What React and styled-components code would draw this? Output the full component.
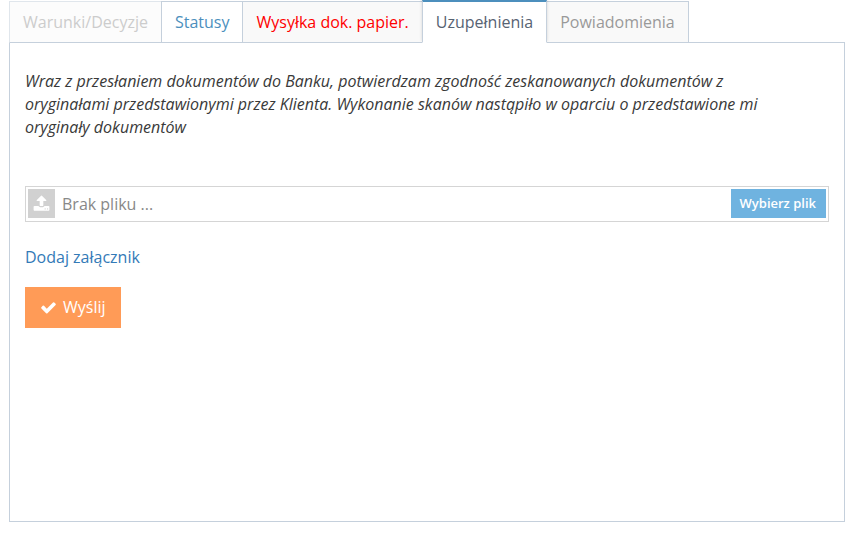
import React, { useRef, useState } from "react";
import styled, { createGlobalStyle } from "styled-components";

const GlobalStyle = createGlobalStyle`
  *, *::before, *::after {
    box-sizing: border-box;
  }
  body {
    margin: 0;
    background: #fff;
    color: #393939;
    font-family: "Open Sans", "Liberation Sans", sans-serif;
    font-size: 16px;
    line-height: 23px;
  }
  button, input {
    font: inherit;
  }
`;

const Page = styled.main`
  display: flex;
  flex-direction: column;
  min-height: 100vh;
  padding: 0 12px 12px 9px;
`;

const TabList = styled.div`
  display: flex;
  align-items: flex-end;
  position: relative;
  z-index: 1;
  margin-bottom: -1px;
`;

const Tab = styled.button`
  height: 42px;
  margin: 0 -1px 0 0;
  padding: 0 13px;
  border: 1px solid #c5d0dc;
  background: ${({ $background }) => $background || "#f9f9f9"};
  color: ${({ $color }) => $color || "#999"};
  white-space: nowrap;
  cursor: pointer;

  &:disabled {
    border-color: #e0e6ec #c5d0dc #c5d0dc #e0e6ec;
    background: #fcfcfc;
    color: #ccc;
    cursor: default;
  }

  &[aria-selected="true"] {
    position: relative;
    height: 43px;
    border-top: 2px solid #4c8fbd;
    border-bottom-color: transparent;
    background: #fff;
    color: #576373;
    box-shadow: 0 -2px 3px 0 rgba(0, 0, 0, 0.15);
    clip-path: inset(0 -3px 0 -3px);
  }
`;

const Panel = styled.section`
  flex: 1;
  padding: 27px 15px 16px;
  border: 1px solid #c5d0dc;
`;

const Statement = styled.p`
  margin: 0 0 47px;
  padding-right: 32px;
  font-style: italic;
`;

const FileField = styled.div`
  display: flex;
  align-items: stretch;
  height: 36px;
  padding: 2px;
  border: 1px solid #d5d5d5;
  background: #fff;
`;

const FileIcon = styled.span`
  display: flex;
  align-items: center;
  justify-content: center;
  width: 27px;
  margin-bottom: 1px;
  background: #d1d1d1;
  color: #fff;
`;

const FileName = styled.label`
  flex: 1;
  align-self: center;
  padding-left: 7px;
  overflow: hidden;
  color: #888;
  text-overflow: ellipsis;
  white-space: nowrap;
`;

const BrowseButton = styled.button`
  margin-bottom: 1px;
  padding: 0 10px 0 9px;
  border: 0;
  background: #6fb3e0;
  color: #fff;
  font-size: 13px;
  font-weight: 600;
  cursor: pointer;
`;

const AddLink = styled.a`
  display: table;
  margin: 24px 0 18px;
  color: #337ab7;
  text-decoration: none;
`;

const SubmitButton = styled.button`
  display: flex;
  align-items: center;
  gap: 6px;
  height: 41px;
  padding: 0 15px;
  border: 0;
  background: #ff9b57;
  color: #fff;
  cursor: pointer;
`;

const tabs = [
  { id: "decisions", label: "Warunki/Decyzje", disabled: true },
  { id: "statuses", label: "Statusy", color: "#4c8fbd", background: "#fff" },
  { id: "paper", label: "Wysyłka dok. papier.", color: "#f00" },
  { id: "supplements", label: "Uzupełnienia" },
  { id: "notifications", label: "Powiadomienia" }
];

const UploadIcon = () => (
  <svg width="17" height="17" viewBox="0 0 1792 1792" fill="currentColor" aria-hidden="true">
    <path d="M1344 1472q0-26-19-45t-45-19-45 19-19 45 19 45 45 19 45-19 19-45zm256 0q0-26-19-45t-45-19-45 19-19 45 19 45 45 19 45-19 19-45zm128-224v320q0 40-28 68t-68 28h-1472q-40 0-68-28t-28-68v-320q0-40 28-68t68-28h427q21 56 70.5 92t110.5 36h256q61 0 110.5-36t70.5-92h427q40 0 68 28t28 68zm-325-648q-17 40-59 40h-256v448q0 26-19 45t-45 19h-256q-26 0-45-19t-19-45v-448h-256q-42 0-59-40-17-39 14-69l448-448q18-19 45-19t45 19l448 448q31 30 14 69z" />
  </svg>
);

const CheckIcon = () => (
  <svg width="17" height="17" viewBox="0 0 1792 1792" fill="currentColor" aria-hidden="true">
    <path d="M1671 566q0 40-28 68l-724 724-136 136q-28 28-68 28t-68-28l-136-136-362-362q-28-28-28-68t28-68l136-136q28-28 68-28t68 28l294 295 656-657q28-28 68-28t68 28l136 136q28 28 28 68z" />
  </svg>
);

function FilePicker() {
  const inputRef = useRef(null);
  const [fileName, setFileName] = useState("");

  const handleChange = event => {
    const file = event.target.files[0];
    setFileName(file ? file.name : "");
  };

  return (
    <FileField>
      <FileIcon>
        <UploadIcon />
      </FileIcon>
      <FileName htmlFor="attachment">{fileName || "Brak pliku ..."}</FileName>
      <input id="attachment" ref={inputRef} type="file" hidden onChange={handleChange} />
      <BrowseButton type="button" onClick={() => inputRef.current.click()}>
        Wybierz plik
      </BrowseButton>
    </FileField>
  );
}

export default function App() {
  const [active, setActive] = useState("supplements");

  return (
    <>
      <GlobalStyle />
      <Page>
        <TabList role="tablist">
          {tabs.map(tab => (
            <Tab
              key={tab.id}
              id={`tab-${tab.id}`}
              type="button"
              role="tab"
              aria-selected={tab.id === active}
              aria-controls="panel"
              disabled={tab.disabled}
              $color={tab.color}
              $background={tab.background}
              onClick={() => setActive(tab.id)}
            >
              {tab.label}
            </Tab>
          ))}
        </TabList>
        <Panel id="panel" role="tabpanel" aria-labelledby={`tab-${active}`}>
          {active === "supplements" && (
            <form onSubmit={event => event.preventDefault()}>
              <Statement>
                Wraz z przesłaniem dokumentów do Banku, potwierdzam zgodność
                zeskanowanych dokumentów z oryginałami przedstawionymi przez
                Klienta. Wykonanie skanów nastąpiło w oparciu o przedstawione mi
                oryginały dokumentów
              </Statement>
              <FilePicker />
              <AddLink href="#attachment">Dodaj załącznik</AddLink>
              <SubmitButton type="submit">
                <CheckIcon />
                Wyślij
              </SubmitButton>
            </form>
          )}
        </Panel>
      </Page>
    </>
  );
}
